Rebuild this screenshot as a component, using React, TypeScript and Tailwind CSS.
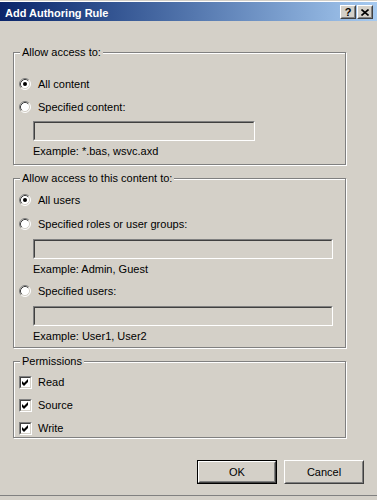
import type { ReactNode } from 'react';

function Radio({ checked }: { checked?: boolean }) {
  return (
    <svg width="12" height="12" viewBox="0 0 12 12" className="shrink-0">
      <circle cx="6" cy="6" r="5" fill="#ffffff" />
      <path d="M2.11 9.89 A5.5 5.5 0 0 1 9.89 2.11" fill="none" stroke="#808080" strokeWidth="1" />
      <path d="M9.89 2.11 A5.5 5.5 0 0 1 2.11 9.89" fill="none" stroke="#ffffff" strokeWidth="1" />
      <path d="M2.82 9.18 A4.5 4.5 0 0 1 9.18 2.82" fill="none" stroke="#404040" strokeWidth="1" />
      <path d="M9.18 2.82 A4.5 4.5 0 0 1 2.82 9.18" fill="none" stroke="#d4d0c8" strokeWidth="1" />
      {checked ? <circle cx="6" cy="6" r="2" fill="#000000" /> : null}
    </svg>
  );
}

function Checkbox() {
  return (
    <div className="h-[13px] w-[13px] shrink-0 border border-t-[#808080] border-l-[#808080] border-b-white border-r-white">
      <div className="h-full w-full border border-t-[#404040] border-l-[#404040] border-b-[#d4d0c8] border-r-[#d4d0c8] bg-white">
        <svg width="9" height="9" viewBox="0 0 9 9">
          <path d="M1 3 L3 5 L7 1 L7 4 L3 8 L1 6 Z" fill="#000000" />
        </svg>
      </div>
    </div>
  );
}

function TextBox({ width }: { width: string }) {
  return (
    <div className={`ml-[19px] h-[20px] ${width} border border-t-[#808080] border-l-[#808080] border-b-white border-r-white`}>
      <div className="h-full w-full border border-t-[#404040] border-l-[#404040] border-b-[#d4d0c8] border-r-[#d4d0c8] bg-[#d4d0c8]" />
    </div>
  );
}

function Group({ legend, className, children }: { legend: string; className: string; children: ReactNode }) {
  return (
    <div
      className={`relative ml-[13px] w-[333px] border border-[#808080] shadow-[inset_1px_1px_0_#ffffff,1px_1px_0_#ffffff] ${className}`}
    >
      <span className="absolute left-[6px] top-[-7px] bg-[#d4d0c8] px-[2px] leading-[12px]">{legend}</span>
      {children}
    </div>
  );
}

function Option({ label, checked, className = '' }: { label: string; checked?: boolean; className?: string }) {
  return (
    <div className={`ml-[5px] flex h-[12px] items-center gap-[7px] ${className}`}>
      <Radio checked={checked} />
      <span className="leading-[12px]">{label}</span>
    </div>
  );
}

function Permission({ label, className = '' }: { label: string; className?: string }) {
  return (
    <div className={`ml-[5px] flex h-[13px] items-center gap-[6px] ${className}`}>
      <Checkbox />
      <span className="leading-[13px]">{label}</span>
    </div>
  );
}

function Button({ label, isDefault }: { label: string; isDefault?: boolean }) {
  return (
    <div className={`h-[24px] w-[80px] ${isDefault ? 'border border-black' : ''}`}>
      <div className="h-full w-full border border-t-white border-l-white border-b-[#404040] border-r-[#404040]">
        <div className="flex h-full w-full items-center justify-center border border-t-[#d4d0c8] border-l-[#d4d0c8] border-b-[#808080] border-r-[#808080] leading-[12px]">
          {label}
        </div>
      </div>
    </div>
  );
}

function CaptionButton({ children }: { children: ReactNode }) {
  return (
    <div className="h-[14px] w-[16px] border border-t-white border-l-white border-b-[#404040] border-r-[#404040] bg-[#d4d0c8]">
      <div className="flex h-full w-full items-center justify-center border border-t-[#d4d0c8] border-l-[#d4d0c8] border-b-[#808080] border-r-[#808080]">
        {children}
      </div>
    </div>
  );
}

export default function App() {
  return (
    <div className="flex h-[500px] w-[377px] flex-col overflow-hidden bg-[#d4d0c8] font-['Liberation_Sans',Arial,sans-serif] text-[11px] text-black">
      <div className="h-px bg-[#d4d0c8]" />
      <div className="h-px bg-white" />

      <div className="flex h-[19px] items-start bg-linear-to-r from-[#0a246a] to-[#a6caf0]">
        <span className="ml-[5px] mt-[5px] font-bold leading-[13px] text-white">Add Authoring Rule</span>
        <div className="ml-auto mr-[4px] mt-[3px] flex gap-[1px]">
          <CaptionButton>
            <span className="text-[11px] font-bold leading-[10px]">?</span>
          </CaptionButton>
          <CaptionButton>
            <svg width="8" height="7" viewBox="0 0 8 7">
              <path d="M0.5 0.5 L7.5 6.5 M7.5 0.5 L0.5 6.5" stroke="#000000" strokeWidth="1.6" />
            </svg>
          </CaptionButton>
        </div>
      </div>

      <Group legend="Allow access to:" className="mt-[31px] pb-[7px] pt-[25px]">
        <Option label="All content" checked />
        <Option label="Specified content:" className="mt-[11px]" />
        <div className="mt-[8px]">
          <TextBox width="w-[222px]" />
        </div>
        <p className="ml-[19px] mt-[4px] leading-[12px]">Example: *.bas, wsvc.axd</p>
      </Group>

      <Group legend="Allow access to this content to:" className="mt-[13px] pb-[5px] pt-[15px]">
        <Option label="All users" checked />
        <Option label="Specified roles or user groups:" className="mt-[12px]" />
        <div className="mt-[9px]">
          <TextBox width="w-[300px]" />
        </div>
        <p className="ml-[19px] mt-[4px] leading-[12px]">Example: Admin, Guest</p>
        <Option label="Specified users:" className="mt-[10px]" />
        <div className="mt-[9px]">
          <TextBox width="w-[300px]" />
        </div>
        <p className="ml-[19px] mt-[4px] leading-[12px]">Example: User1, User2</p>
      </Group>

      <Group legend="Permissions" className="mt-[13px] pb-[2px] pt-[14px]">
        <Permission label="Read" />
        <Permission label="Source" className="mt-[10px]" />
        <Permission label="Write" className="mt-[10px]" />
      </Group>

      <div className="ml-[197px] mt-[22px] flex gap-[7px]">
        <Button label="OK" isDefault />
        <Button label="Cancel" />
      </div>

      <div className="mt-[11px] h-px bg-[#808080]" />
    </div>
  );
}
